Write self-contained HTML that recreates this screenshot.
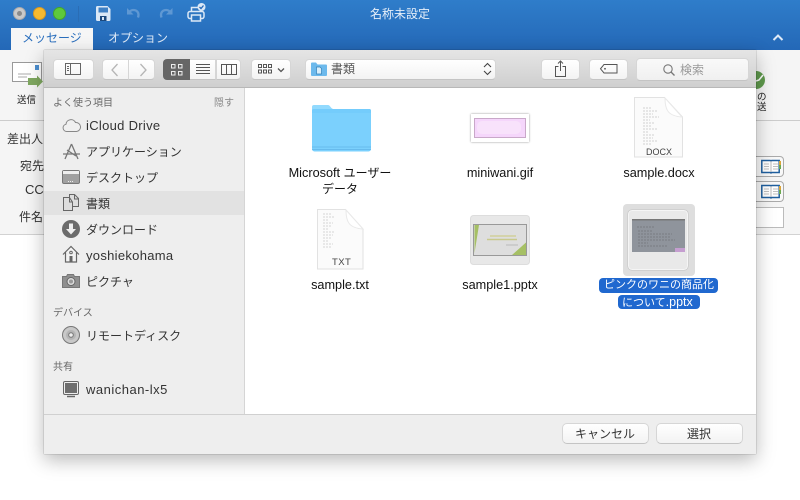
<!DOCTYPE html>
<html lang="ja"><head><meta charset="utf-8"><style>
html,body{margin:0;padding:0;width:800px;height:500px;overflow:hidden;background:#fff}
body{font-family:"Liberation Sans","Noto Sans CJK JP",sans-serif;position:relative;font-size:12px;color:#333}
.a{position:absolute}
.t{position:absolute;white-space:nowrap;line-height:16px}
.btn{position:absolute;box-sizing:border-box;background:linear-gradient(#fff,#f3f3f3);border:1px solid #d6d6d6;border-bottom-color:#c4c4c4;border-radius:4px}
svg{position:absolute;overflow:visible}
.side{font-size:12px;color:#333;left:86px}
.lat{font-size:13px;letter-spacing:.3px}
.hd{font-size:10px;color:#666;left:53px}
.lab{font-size:12.7px;color:#111;text-align:center;width:130px}
.lab .j{font-size:12px}
.fl{font-size:12px;color:#333}
.ic{fill:none;stroke:#666;stroke-width:1}
</style></head><body>

<!-- title bar -->
<div class="a" style="left:0;top:0;width:800px;height:50px;background:linear-gradient(#2f7dca,#2468b7)"></div>
<div class="a" style="left:13px;top:7px;width:13px;height:13px;border-radius:50%;background:#c9c9c9;border:.5px solid #aaa;box-sizing:border-box"></div>
<div class="a" style="left:17px;top:11px;width:5px;height:5px;border-radius:50%;background:#8a8a8a"></div>
<div class="a" style="left:33px;top:7px;width:13px;height:13px;border-radius:50%;background:#f6b92f;border:.5px solid #d89a20;box-sizing:border-box"></div>
<div class="a" style="left:53px;top:7px;width:13px;height:13px;border-radius:50%;background:#5ec93c;border:.5px solid #45a52b;box-sizing:border-box"></div>
<div class="a" style="left:78px;top:6px;width:1px;height:16px;background:#2a6db5"></div>
<!-- save -->
<svg style="left:96px;top:6px" width="15" height="15" viewBox="0 0 15 15"><path d="M1.500 0h10l3 3v10.500a1.500 1.500 0 0 1-1.500 1.500H1.500A1.500 1.500 0 0 1 0 13.500v-12A1.500 1.500 0 0 1 1.500 0z" fill="#dbe8f6"/><rect x="2.500" y="1.500" width="9.500" height="5" fill="#3f80c4"/><rect x="4" y="10" width="6.500" height="5" fill="#1d4a7e"/><rect x="6" y="11" width="2" height="3" fill="#dbe8f6"/></svg>
<!-- undo / redo -->
<svg style="left:126px;top:7px" width="15" height="13" viewBox="0 0 15 13"><path d="M1 1v6.500h6.500z" fill="#5f98d3"/><path d="M2.500 6C4 3.500 6.500 2.500 9 3.200c3 .8 4.300 3.800 3 7.300" fill="none" stroke="#5f98d3" stroke-width="2.300"/></svg>
<svg style="left:158px;top:7px" width="15" height="13" viewBox="0 0 15 13"><path d="M14.500 1v6.500H8z" fill="#5f98d3"/><path d="M13 6C11.500 3.500 9 2.500 6.500 3.200c-3 .8-4.300 3.800-3 7.300" fill="none" stroke="#5f98d3" stroke-width="2.300"/></svg>
<!-- print -->
<svg style="left:187px;top:3px" width="19" height="19" viewBox="0 0 19 19"><rect x="4.500" y="4.500" width="9" height="5" fill="#2e76c1" stroke="#dbe8f6" stroke-width="1.500"/><rect x="1" y="8.500" width="16" height="7" rx="2" fill="#2e76c1" stroke="#dbe8f6" stroke-width="1.500"/><rect x="4.500" y="12" width="9" height="6" fill="#2e76c1" stroke="#dbe8f6" stroke-width="1.500"/><circle cx="14.500" cy="4" r="4" fill="#dbe8f6"/><path d="M12.500 4l1.500 1.500 2.500-3" fill="none" stroke="#2468b7" stroke-width="1.300"/></svg>
<div class="t" style="left:370px;top:6px;font-size:12px;color:#e6eff9">名称未設定</div>
<!-- tabs -->
<div class="a" style="left:11px;top:28px;width:82px;height:22px;background:#f6f6f6"></div>
<div class="t" style="left:22px;top:30px;font-size:12px;color:#2b6fbd">メッセージ</div>
<div class="t" style="left:108px;top:30px;font-size:12px;color:#dfeaf7">オプション</div>
<svg style="left:773px;top:34px" width="10" height="7" viewBox="0 0 10 7"><path d="M.5 6L5 1.500 9.500 6" fill="none" stroke="#dfeaf7" stroke-width="2"/></svg>

<!-- ribbon -->
<div class="a" style="left:0;top:50px;width:800px;height:70px;background:#f5f5f5;border-bottom:1px solid #ccc"></div>
<div class="a" style="left:0;top:121px;width:800px;height:113px;background:#f5f5f5;border-bottom:1px solid #d2d2d2"></div>
<svg style="left:12px;top:62px" width="32" height="27" viewBox="0 0 32 27"><rect x=".5" y=".5" width="29" height="19" fill="#fff" stroke="#999"/><rect x="23" y="3" width="4" height="5" fill="#4c8fd0"/><path d="M6 12h13M6 15h9" stroke="#aaa"/><path d="M16 16h9v-2.500l6 6-6 6V23h-9z" fill="#7fa860"/></svg>
<div class="t" style="left:17px;top:93px;font-size:9.500px;color:#222">送信</div>
<div class="t" style="left:757px;top:93px;font-size:9.500px;color:#222;line-height:10px">の<br>&#x9001;</div>
<div class="a" style="left:756px;top:71px;width:9px;height:18px;border-radius:0 9px 9px 0;background:#5f9a4d"></div>
<svg style="left:756px;top:74px" width="8" height="10" viewBox="0 0 8 10"><path d="M0 7l3-1 4-5" fill="none" stroke="#fff" stroke-width="1.500"/></svg>

<div class="t fl" style="left:7px;top:131px">差出人</div>
<div class="t fl" style="left:20px;top:158px">宛先</div>
<div class="t fl" style="left:25px;top:182px;font-size:13px">CC</div>
<div class="t fl" style="left:19px;top:209px">件名</div>
<div class="a" style="left:756px;top:156px;width:28px;height:21px;box-sizing:border-box;border:1px solid #aaa;border-left:0;border-radius:0 4px 4px 0;background:#f8f8f8"></div>
<div class="a" style="left:756px;top:181px;width:28px;height:21px;box-sizing:border-box;border:1px solid #aaa;border-left:0;border-radius:0 4px 4px 0;background:#f8f8f8"></div>
<svg style="left:761px;top:159px" width="20" height="15" viewBox="0 0 20 15"><path d="M.8 1.500h8.500l.7.500.7-.5h7.500v12h-7.500l-.7.500-.7-.5H.8z" fill="#fff" stroke="#1f5f9e" stroke-width="1.500"/><path d="M10 2v11M3 5h5M3 7.500h5M3 10h5M12 5h5M12 7.500h5M12 10h5" stroke="#aaa" stroke-width=".8"/><rect x="18" y="2" width="2" height="4" fill="#d9a43a"/><rect x="18" y="6" width="2" height="4" fill="#6aa84f"/></svg>
<svg style="left:761px;top:184px" width="20" height="15" viewBox="0 0 20 15"><path d="M.8 1.500h8.500l.7.500.7-.5h7.500v12h-7.500l-.7.500-.7-.5H.8z" fill="#fff" stroke="#1f5f9e" stroke-width="1.500"/><path d="M10 2v11M3 5h5M3 7.500h5M3 10h5M12 5h5M12 7.500h5M12 10h5" stroke="#aaa" stroke-width=".8"/><rect x="18" y="2" width="2" height="4" fill="#d9a43a"/><rect x="18" y="6" width="2" height="4" fill="#6aa84f"/></svg>
<div class="a" style="left:756px;top:207px;width:28px;height:21px;box-sizing:border-box;border:1px solid #bbb;border-left:0;background:#fff"></div>

<!-- dialog -->
<div class="a" style="left:44px;top:50px;width:712px;height:404px;background:#ececec;box-shadow:0 0 1px rgba(0,0,0,.45),0 6px 18px rgba(0,0,0,.28)"></div>
<div class="a" style="left:44px;top:50px;width:712px;height:38px;background:linear-gradient(#e5e5e5,#cfcfcf);border-bottom:1px solid #b8b8b8;box-sizing:border-box"></div>
<div class="a" style="left:44px;top:88px;width:200px;height:326px;background:#eeeeee"></div>
<div class="a" style="left:244px;top:88px;width:1px;height:326px;background:#d5d5d5"></div>
<div class="a" style="left:245px;top:88px;width:511px;height:326px;background:#fff"></div>
<div class="a" style="left:44px;top:414px;width:712px;height:1px;background:#d0d0d0"></div>
<div class="a" style="left:44px;top:415px;width:712px;height:39px;background:#eeeeee"></div>

<!-- toolbar -->
<div class="btn" style="left:53px;top:59px;width:41px;height:21px"></div>
<svg style="left:65px;top:63px" width="17" height="13" viewBox="0 0 17 13"><rect x=".5" y=".5" width="15" height="11" class="ic"/><path d="M5.500 1v10M2 3.500h2M2 5.500h2M2 7.500h2" class="ic"/></svg>
<div class="btn" style="left:102px;top:59px;width:27px;height:21px;border-radius:4px 0 0 4px"></div>
<div class="btn" style="left:128px;top:59px;width:27px;height:21px;border-radius:0 4px 4px 0"></div>
<svg style="left:110px;top:63px" width="10" height="14" viewBox="0 0 10 14"><path d="M7.500 1L2 7l5.500 6" fill="none" stroke="#b5b5b5" stroke-width="1.300"/></svg>
<svg style="left:138px;top:63px" width="10" height="14" viewBox="0 0 10 14"><path d="M2.500 1L8 7l-5.500 6" fill="none" stroke="#b5b5b5" stroke-width="1.300"/></svg>
<div class="a" style="left:163px;top:59px;width:27px;height:21px;background:#666;border-radius:4px 0 0 4px"></div>
<svg style="left:171px;top:64px" width="12" height="12" viewBox="0 0 12 12"><g fill="none" stroke="#eee"><rect x=".5" y=".5" width="3.500" height="3.500"/><rect x="7.500" y=".5" width="3.500" height="3.500"/><rect x=".5" y="7.500" width="3.500" height="3.500"/><rect x="7.500" y="7.500" width="3.500" height="3.500"/></g></svg>
<div class="btn" style="left:190px;top:59px;width:26px;height:21px;border-radius:0;border-left:0"></div>
<div class="btn" style="left:216px;top:59px;width:25px;height:21px;border-radius:0 4px 4px 0;border-left:1px solid #d5d5d5"></div>
<svg style="left:196px;top:64px" width="15" height="11" viewBox="0 0 15 11"><path d="M0 .5h14M0 3.500h14M0 6.500h14M0 9.500h14" stroke="#555"/></svg>
<svg style="left:221px;top:64px" width="16" height="11" viewBox="0 0 16 11"><rect x=".5" y=".5" width="15" height="10" class="ic" style="stroke:#555"/><path d="M5.500 1v9M10.500 1v9" stroke="#555"/></svg>
<div class="btn" style="left:251px;top:59px;width:40px;height:21px"></div>
<svg style="left:258px;top:64px" width="15" height="11" viewBox="0 0 15 11"><g fill="none" stroke="#555"><rect x=".5" y=".5" width="3" height="3"/><rect x="5.500" y=".5" width="3" height="3"/><rect x="10.500" y=".5" width="3" height="3"/><rect x=".5" y="6" width="3" height="3"/><rect x="5.500" y="6" width="3" height="3"/><rect x="10.500" y="6" width="3" height="3"/></g></svg>
<svg style="left:277px;top:67px" width="8" height="6" viewBox="0 0 8 6"><path d="M1 1.500l3 3 3-3" fill="none" stroke="#555" stroke-width="1.300"/></svg>
<div class="btn" style="left:305px;top:59px;width:191px;height:21px"></div>
<svg style="left:311px;top:62px" width="16" height="15" viewBox="0 0 16 15"><path d="M0 1.500a1 1 0 0 1 1-1h4l1.500 2H15a1 1 0 0 1 1 1V13a1 1 0 0 1-1 1H1a1 1 0 0 1-1-1z" fill="#6cb9ec"/><path d="M5.500 5h3.500l1.500 1.500V12h-5z" fill="#d8eefb" stroke="#2f7fb8" stroke-width=".7"/></svg>
<div class="t" style="left:331px;top:61px;font-size:12px;color:#555">書類</div>
<svg style="left:483px;top:62px" width="9" height="14" viewBox="0 0 9 14"><path d="M1 5l3.500-3.500L8 5M1 9l3.500 3.500L8 9" fill="none" stroke="#444" stroke-width="1.100"/></svg>
<div class="btn" style="left:541px;top:59px;width:39px;height:21px"></div>
<svg style="left:555px;top:60px" width="12" height="17" viewBox="0 0 12 17"><path d="M3.500 6.500H.5v10h10v-10h-3M5.500 11V1M3 3.500L5.500 1 8 3.500" fill="none" stroke="#555"/></svg>
<div class="btn" style="left:589px;top:59px;width:39px;height:21px"></div>
<svg style="left:600px;top:64px" width="18" height="10" viewBox="0 0 18 10"><path d="M4 .5h13v8.500H4L.5 4.800z" fill="none" stroke="#555"/><circle cx="5" cy="4.800" r=".9" fill="#555"/></svg>
<div class="btn" style="left:636px;top:58px;width:113px;height:23px;background:linear-gradient(#f9f9f9,#f0f0f0)"></div>
<svg style="left:663px;top:64px" width="13" height="12" viewBox="0 0 13 12"><circle cx="5" cy="5" r="4.200" fill="none" stroke="#777" stroke-width="1.100"/><path d="M8 8l3.500 3.500" stroke="#777" stroke-width="1.300"/></svg>
<div class="t" style="left:680px;top:62px;font-size:12px;color:#999">検索</div>

<!-- sidebar -->
<div class="t hd" style="top:96px">よく使う項目</div>
<div class="t hd" style="left:214px;top:96px;color:#888">隠す</div>
<div class="a" style="left:44px;top:191px;width:200px;height:24px;background:#e2e2e2"></div>

<svg style="left:62px;top:118px" width="19" height="14" viewBox="0 0 19 14"><path d="M4.500 13.500a3.700 3.700 0 0 1-.5-7.300A5 5 0 0 1 13.500 4.500a4.400 4.400 0 0 1 1 9z" fill="#f0f0f0" stroke="#888"/></svg>
<div class="t side lat" style="top:118px">iCloud Drive</div>
<svg style="left:62px;top:143px" width="19" height="17" viewBox="0 0 19 17"><path d="M9.500 1L3 16M9.500 1L16 16M1 11h17M5 7l9 6" fill="none" stroke="#777" stroke-width="1.300"/></svg>
<div class="t side" style="top:144px">アプリケーション</div>
<svg style="left:62px;top:170px" width="18" height="14" viewBox="0 0 18 14"><rect x=".5" y=".5" width="17" height="13" rx="1.500" fill="#a0a0a0" stroke="#777"/><rect x="1" y="1" width="16" height="3" fill="#eee"/><path d="M6 11.500h6" stroke="#eee" stroke-dasharray="1 1"/></svg>
<div class="t side" style="top:170px">デスクトップ</div>
<svg style="left:63px;top:194px" width="17" height="17" viewBox="0 0 17 17"><path d="M6.500 3.500h-6v13h9V8z" fill="#ddd" stroke="#666"/><path d="M6.500.5h5l4 4v8h-6V8L6.500 3.500z" fill="#ddd" stroke="#666"/><path d="M11.500 1v4h4" fill="none" stroke="#666"/><path d="M6.500 3.500V8h3" fill="none" stroke="#666"/></svg>
<div class="t side" style="top:196px">書類</div>
<div class="a" style="left:62px;top:220px;width:18px;height:18px;border-radius:50%;background:#6b6b6b"></div>
<svg style="left:62px;top:220px" width="18" height="18" viewBox="0 0 18 18"><path d="M7 3.500h4v5.500h3L9 14.500 4 9h3z" fill="#eee"/></svg>
<div class="t side" style="top:222px">ダウンロード</div>
<svg style="left:62px;top:245px" width="18" height="18" viewBox="0 0 18 18"><path d="M1 9.500L9 1.500l8 8M3.500 7.500v9.500h11V7.500" fill="#f3f3f3" stroke="#666" stroke-width="1.200"/><rect x="7.500" y="11" width="3" height="6" fill="#666"/><circle cx="9" cy="7.500" r="1.300" fill="none" stroke="#666"/></svg>
<div class="t side lat" style="top:248px">yoshiekohama</div>
<svg style="left:62px;top:274px" width="18" height="14" viewBox="0 0 18 14"><path d="M.5 2.500h4l1-2h6l1 2h5v11H.5z" fill="#8f8f8f" stroke="#777"/><circle cx="9" cy="7.500" r="4" fill="#ddd" stroke="#666"/><circle cx="9" cy="7.500" r="2" fill="#999"/></svg>
<div class="t side" style="top:274px">ピクチャ</div>

<div class="t hd" style="top:306px">デバイス</div>
<svg style="left:62px;top:326px" width="18" height="18" viewBox="0 0 18 18"><circle cx="9" cy="9" r="8.500" fill="#c8c8c8" stroke="#777"/><circle cx="9" cy="9" r="5" fill="#b5b5b5"/><circle cx="9" cy="9" r="2.300" fill="#eee" stroke="#777"/></svg>
<div class="t side" style="top:328px">リモートディスク</div>
<div class="t hd" style="top:360px">共有</div>
<svg style="left:63px;top:381px" width="16" height="17" viewBox="0 0 16 17"><rect x=".5" y=".5" width="15" height="13" rx="1.500" fill="#eee" stroke="#666"/><rect x="2" y="2" width="12" height="10" fill="#6e6e6e"/><path d="M4 15.500h8" stroke="#666" stroke-width="1.500"/></svg>
<div class="t side lat" style="top:382px;letter-spacing:.5px">wanichan-lx5</div>

<!-- files -->
<svg style="left:311px;top:105px" width="60" height="47" viewBox="0 0 60 47"><path d="M1 2a2 2 0 0 1 2-2h14c2 0 2.500 3 5 4h36a2 2 0 0 1 2 2v5H1z" fill="#92dafe"/><path d="M1 6a2 2 0 0 1 2-2h55a2 2 0 0 1 2 2v38a2.500 2.500 0 0 1-2.500 2.500h-54A2.500 2.500 0 0 1 1 44z" fill="#7bd0fd"/><path d="M1 6a2 2 0 0 1 2-2h55a2 2 0 0 1 2 2v2H1z" fill="#74ccfc"/><path d="M1 42h59M1 44.500h59" stroke="#62b4e8" stroke-width=".8"/></svg>
<div class="t lab" style="left:275px;top:165px">Microsoft <span class="j">ユーザー</span><br><span class="j" style="display:block;margin-top:0">データ</span></div>

<div class="a" style="left:471px;top:114px;width:58px;height:28px;box-sizing:border-box;background:#fff;box-shadow:0 0 2px rgba(0,0,0,.45)"></div>
<div class="a" style="left:474px;top:118px;width:52px;height:20px;box-sizing:border-box;background:#f5d6fb;border:1px solid #c9a8c9"></div>
<div class="a" style="left:477px;top:121px;width:44px;height:13px;border-radius:5px;background:#f8e2fb"></div>
<div class="t lab" style="left:435px;top:165px">miniwani.gif</div>

<svg style="left:634px;top:97px" width="50" height="61" viewBox="0 0 50 61"><path d="M.5 .5h30L48.500 20v40H.5z" fill="#fbfbfb" stroke="#e2e2e2"/><path d="M31 1c0 12 3 18 17 19z" fill="#fff" stroke="#e9e9e9"/><path d="M9 11h8M9 14h14M9 17h10M9 20h16M9 23h7M9 26h12M9 29h9M9 32h15M9 35h6M9 38h12M9 41h10M9 44h14M9 47h8" stroke="#c4c4c4" stroke-width=".8" stroke-dasharray="2 1"/></svg>
<div class="t" style="left:646px;top:144px;font-size:9px;color:#444">DOCX</div>
<div class="t lab" style="left:594px;top:165px">sample.docx</div>

<svg style="left:317px;top:209px" width="47" height="61" viewBox="0 0 47 61"><path d="M.5 .5h28L46 20v40H.5z" fill="#fbfbfb" stroke="#e2e2e2"/><path d="M29 1c0 12 3 18 17 19z" fill="#fff" stroke="#e9e9e9"/><path d="M6 5h8M6 8h12M6 11h6M6 14h10M6 17h8M6 20h6M6 23h12M6 26h10M6 29h8M6 32h6M6 35h10M6 38h8" stroke="#c9c9c9" stroke-width=".8" stroke-dasharray="2 1"/></svg>
<div class="t" style="left:332px;top:255px;font-size:9.500px;color:#444;letter-spacing:.4px">TXT</div>
<div class="t lab" style="left:275px;top:277px">sample.txt</div>

<svg style="left:470px;top:215px" width="60" height="50" viewBox="0 0 60 50"><rect x=".5" y=".5" width="59" height="49" rx="3" fill="#e8e8e8" stroke="#ddd"/><rect x="3.500" y="9.500" width="53" height="31" fill="#dedede" stroke="#999"/><path d="M4.500 10h4.500L4.500 38z" fill="#a6c065"/><path d="M56 27.500V40H42z" fill="#a6c065"/><path d="M20 21h26" stroke="#d0cf9a" stroke-width="1.500"/><path d="M17 24.500h30" stroke="#c9c98c" stroke-width="1.500"/><path d="M36 30h12" stroke="#bbb"/></svg>
<div class="t lab" style="left:435px;top:277px">sample1.pptx</div>

<div class="a" style="left:623px;top:204px;width:72px;height:72px;border-radius:4px;background:#dedede"></div>
<div class="a" style="left:628px;top:210px;width:60px;height:60px;box-sizing:border-box;border-radius:4px;background:#e9e9e9;border:1px solid #f5f5f5;box-shadow:0 0 1px #888"></div>
<svg style="left:632px;top:219px" width="53" height="33" viewBox="0 0 53 33"><rect width="53" height="33" fill="#8f949c"/><rect width="53" height="1.500" fill="#777"/><path d="M5 8h18M6 12h14M6 15h34M6 18h32M6 21h37M6 24h10M6 27h30" stroke="#72747a" stroke-width=".8" stroke-dasharray="2 1"/><rect x="43" y="29" width="10" height="4" fill="#c59ed0"/></svg>
<div class="a" style="left:599px;top:278px;width:119px;height:15px;border-radius:4px;background:#2068cf"></div>
<div class="a" style="left:618px;top:295px;width:82px;height:14px;border-radius:4px;background:#2068cf"></div>
<div class="t" style="left:604px;top:277px;font-size:11px;color:#fff">ピンクのワニの商品化</div>
<div class="t" style="left:622px;top:294px;font-size:11px;color:#fff">について<span style="font-size:12.500px">.pptx</span></div>

<!-- buttons -->
<div class="btn" style="left:562px;top:423px;width:87px;height:21px;border-radius:5px"></div>
<div class="t" style="left:575px;top:426px;font-size:12px;color:#333">キャンセル</div>
<div class="btn" style="left:656px;top:423px;width:87px;height:21px;border-radius:5px"></div>
<div class="t" style="left:687px;top:426px;font-size:12px;color:#333">選択</div>
</body></html>
